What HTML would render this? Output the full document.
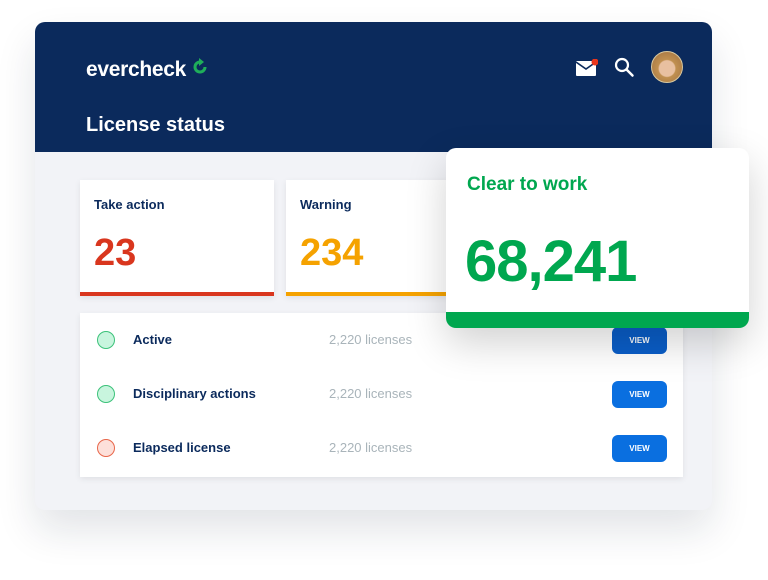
<!DOCTYPE html>
<html><head><style>
*{margin:0;padding:0;box-sizing:border-box}
body{width:768px;height:580px;background:#fff;font-family:"Liberation Sans",sans-serif;position:relative;overflow:hidden}
.frame{position:absolute;left:35px;top:22px;width:677px;height:488px;background:#f2f3f7;border-radius:10px;overflow:hidden;box-shadow:0 20px 40px rgba(20,30,60,.12)}
.hdr{position:absolute;left:0;top:0;width:677px;height:130px;background:#0b2a5c}
.logo{position:absolute;left:51px;top:36px;color:#fff;font-size:21px;font-weight:bold;letter-spacing:-.3px}
.title{position:absolute;left:51px;top:92px;color:#fff;font-size:20px;font-weight:bold}
.card{position:absolute;background:#fff;box-shadow:0 2px 6px rgba(0,0,0,.08)}
.card .l{position:absolute;left:14px;top:17px;font-size:13px;font-weight:bold;color:#0b2a5c}
.card .n{position:absolute;left:14px;top:52px;font-size:38px;font-weight:bold}
.list{position:absolute;left:80px;top:313px;width:603px;height:164px;background:#fff;box-shadow:0 2px 6px rgba(0,0,0,.08)}
.row{position:absolute;left:0;width:603px;height:30px}
.dot{position:absolute;left:17px;top:6px;width:18px;height:18px;border-radius:50%}
.nm{position:absolute;left:53px;top:7px;font-size:13px;font-weight:bold;color:#0b2a5c}
.ct{position:absolute;left:249px;top:7px;font-size:13px;color:#a9b4ba}
.btn{position:absolute;left:532px;top:2px;width:55px;height:27px;border-radius:6px;background:#0a6fe0;color:#fff;font-size:8px;font-weight:bold;text-align:center;line-height:27px}
.pop{position:absolute;left:446px;top:148px;width:303px;height:180px;background:#fff;border-radius:10px;overflow:hidden;box-shadow:0 15px 40px rgba(0,0,0,.18)}
</style></head><body>
<div class="frame">
<div class="hdr">
<div class="logo">evercheck <svg width="18" height="20" viewBox="0 0 18 20" style="vertical-align:-2px"><path d="M13 9a5 5 0 1 1-5-5" fill="none" stroke="#1fae5a" stroke-width="3"/><path d="M7 0l5 4-5 4z" fill="#1fae5a"/></svg></div>
<div class="title">License status</div>
<svg style="position:absolute;left:541px;top:37px" width="22" height="18" viewBox="0 0 22 18"><rect x="0" y="2" width="20" height="15" rx="1" fill="#fff"/><path d="M0 3l10 7 10-7" fill="none" stroke="#0b2a5c" stroke-width="1.6"/><circle cx="19" cy="3" r="3.5" fill="#e8361c"/></svg>
<svg style="position:absolute;left:579px;top:35px" width="22" height="22" viewBox="0 0 22 22"><circle cx="8" cy="8" r="6" fill="none" stroke="#fff" stroke-width="2.2"/><path d="M12.5 12.5l6 6" stroke="#fff" stroke-width="2.5" stroke-linecap="round"/></svg>
<div style="position:absolute;left:616px;top:29px;width:32px;height:32px;border-radius:50%;background:radial-gradient(circle at 50% 55%,#e8c0a0 0 35%,#c09050 40%,#a07040 100%);border:1px solid #d8c8a0"></div>
</div>
</div>
<div class="card" style="left:80px;top:180px;width:194px;height:116px;border-bottom:4px solid #d9361e"><div class="l">Take action</div><div class="n" style="color:#d9361e">23</div></div>
<div class="card" style="left:286px;top:180px;width:170px;height:116px;border-bottom:4px solid #f5a200"><div class="l">Warning</div><div class="n" style="color:#f5a200">234</div></div>
<div class="list">
<div class="row" style="top:12px"><div class="dot" style="background:#c8f5de;border:1.5px solid #3cc27a"></div><div class="nm">Active</div><div class="ct">2,220 licenses</div><div class="btn" style="background:#0a5ec8">VIEW</div></div>
<div class="row" style="top:66px"><div class="dot" style="background:#c8f5de;border:1.5px solid #3cc27a"></div><div class="nm">Disciplinary actions</div><div class="ct">2,220 licenses</div><div class="btn">VIEW</div></div>
<div class="row" style="top:120px"><div class="dot" style="background:#fde0da;border:1.5px solid #e8664a"></div><div class="nm">Elapsed license</div><div class="ct">2,220 licenses</div><div class="btn">VIEW</div></div>
</div>
<div class="pop">
<div style="position:absolute;left:21px;top:26px;font-size:19px;font-weight:bold;color:#00a74f">Clear to work</div>
<div style="position:absolute;left:19px;top:80px;font-size:58px;font-weight:bold;color:#00a74f;letter-spacing:-1px">68,241</div>
<div style="position:absolute;left:0;bottom:0;width:303px;height:16px;background:#00a74f"></div>
</div>
</body></html>
